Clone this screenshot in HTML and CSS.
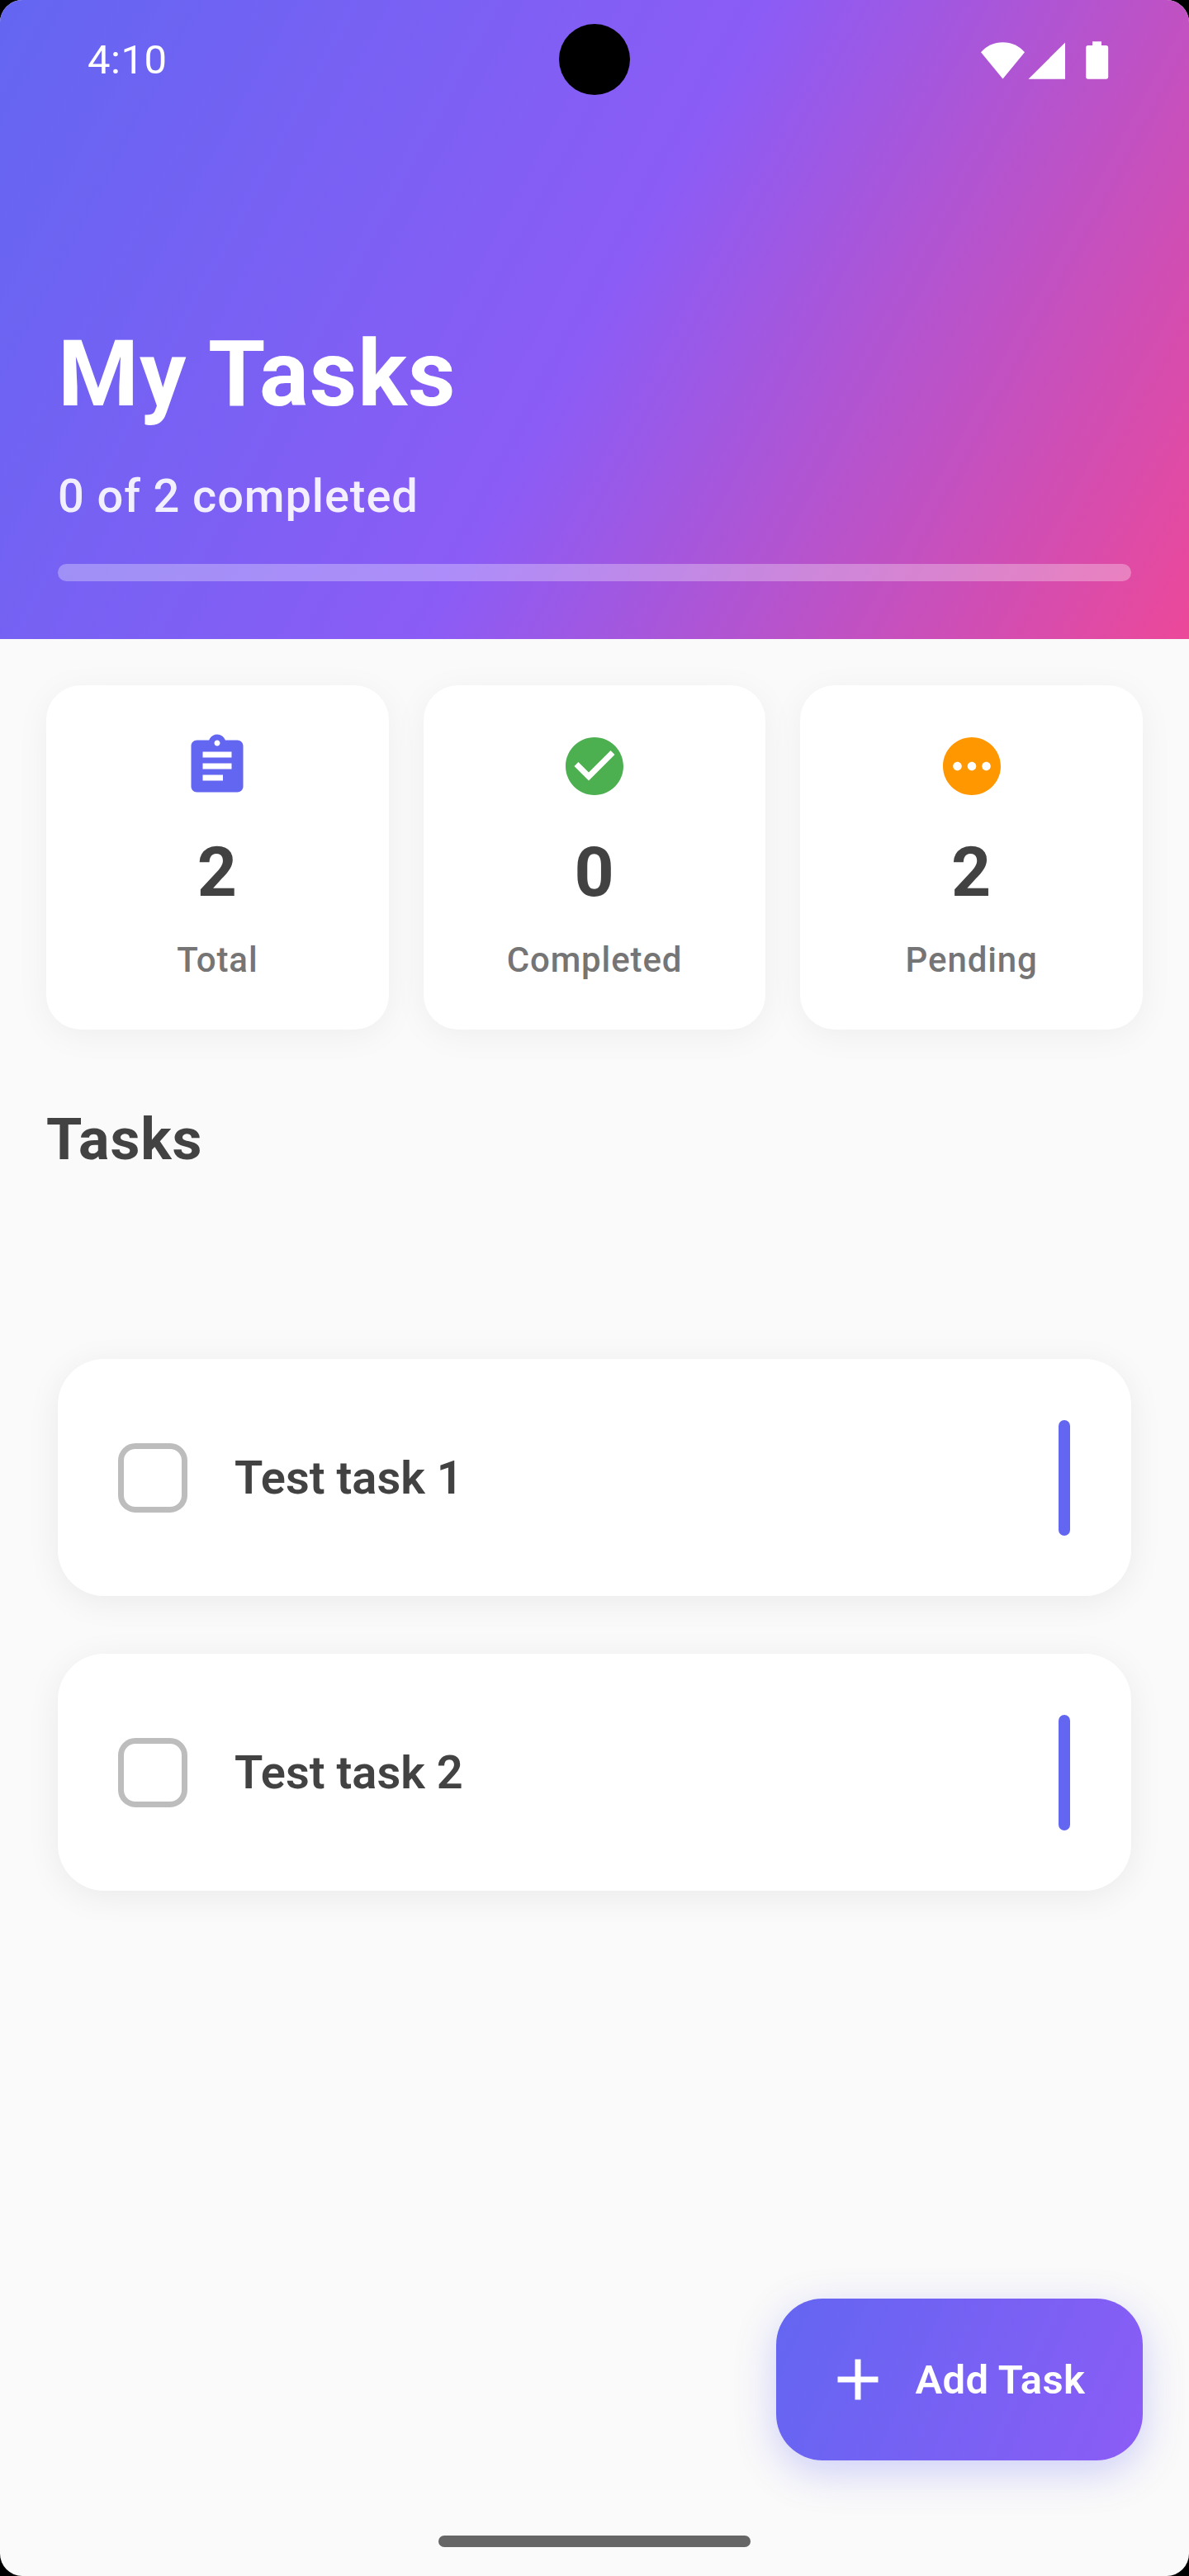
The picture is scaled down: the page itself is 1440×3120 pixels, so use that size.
FILE: index.html
```html
<!DOCTYPE html>
<html lang="en">
<head>
<meta charset="utf-8">
<title>My Tasks</title>
<link rel="stylesheet" href="styles.css">
</head>
<body>
<div class="screen">
  <header class="header">
    <div class="status-bar">
      <span class="clock">4:10</span>
      <svg class="status-icons" width="156" height="48" viewBox="0 0 156 48" fill="#fff">
        <path d="M0 14.2C7 6.500 16 2.300 26.500 2.300S46 6.500 53 14.200L26.500 46.500Z"/>
        <path d="M57.500 46.700L102 2.500V46.700Z"/>
        <path d="M135 1.200h11V6h5.500a2.700 2.700 0 0 1 2.700 2.700V44a2.700 2.700 0 0 1-2.700 2.700h-21.600a2.700 2.700 0 0 1-2.700-2.700V8.700A2.700 2.700 0 0 1 129.900 6H135Z"/>
      </svg>
    </div>
    <h1 class="title">My Tasks</h1>
    <p class="subtitle">0 of 2 completed</p>
    <div class="progress"></div>
  </header>
  <main class="content">
    <section class="stats">
      <div class="stat-card">
        <svg class="stat-icon total" viewBox="0 0 24 24"><path d="M19 3h-4.180C14.400 1.840 13.300 1 12 1c-1.300 0-2.400.84-2.820 2H5c-1.100 0-2 .9-2 2v14c0 1.100.9 2 2 2h14c1.100 0 2-.9 2-2V5c0-1.100-.9-2-2-2zm-7 0c.55 0 1 .45 1 1s-.45 1-1 1-1-.45-1-1 .45-1 1-1zm2 14H7v-2h7v2zm3-4H7v-2h10v2zm0-4H7V7h10v2z"/></svg>
        <span class="stat-value">2</span>
        <span class="stat-label">Total</span>
      </div>
      <div class="stat-card">
        <svg class="stat-icon done" viewBox="0 0 24 24"><path d="M12 2C6.480 2 2 6.480 2 12s4.480 10 10 10 10-4.480 10-10S17.520 2 12 2zm-2 15l-5-5 1.410-1.410L10 14.170l7.590-7.590L19 8l-9 9z"/></svg>
        <span class="stat-value">0</span>
        <span class="stat-label">Completed</span>
      </div>
      <div class="stat-card">
        <svg class="stat-icon pending" viewBox="0 0 24 24"><path d="M12 2C6.480 2 2 6.480 2 12s4.480 10 10 10 10-4.480 10-10S17.520 2 12 2zM7 13.500c-.83 0-1.500-.67-1.500-1.500s.67-1.500 1.500-1.500 1.500.67 1.500 1.500-.67 1.500-1.500 1.500zm5 0c-.83 0-1.500-.67-1.500-1.500s.67-1.500 1.500-1.500 1.500.67 1.500 1.500-.67 1.500-1.500 1.500zm5 0c-.83 0-1.500-.67-1.500-1.500s.67-1.500 1.500-1.500 1.500.67 1.500 1.500-.67 1.500-1.500 1.500z"/></svg>
        <span class="stat-value">2</span>
        <span class="stat-label">Pending</span>
      </div>
    </section>
    <h2 class="section-title">Tasks</h2>
    <ul class="task-list">
      <li class="task">
        <span class="checkbox"></span>
        <span class="task-name">Test task 1</span>
        <span class="accent"></span>
      </li>
      <li class="task">
        <span class="checkbox"></span>
        <span class="task-name">Test task 2</span>
        <span class="accent"></span>
      </li>
    </ul>
  </main>
  <div class="camera"></div>
  <button class="fab" type="button">
    <svg class="fab-icon" viewBox="0 0 24 24"><path d="M19 13h-6v6h-2v-6H5v-2h6V5h2v6h6v2z"/></svg>
    <span class="fab-label">Add Task</span>
  </button>
  <div class="nav-pill"></div>
</div>
</body>
</html>
```
FILE: styles.css
```css
* {
  box-sizing: border-box;
}

body {
  margin: 0;
  background: #000;
  font-family: Roboto, "Liberation Sans", sans-serif;
}

h1, h2, p, ul {
  margin: 0;
  padding: 0;
}

.screen {
  position: relative;
  width: 1440px;
  height: 3120px;
  overflow: hidden;
  border-radius: 27px;
  background: #fafafa;
}

.header {
  height: 774px;
  padding: 0 70px;
  background: linear-gradient(118.26deg, #6366f1 0%, #8b5cf6 50%, #ec4899 100%);
  color: #fff;
}

.status-bar {
  display: flex;
  align-items: center;
  justify-content: space-between;
  height: 144px;
  padding: 1px 26px 0 36px;
}

.clock {
  font-size: 49px;
  line-height: 58px;
  letter-spacing: 0.5px;
}

.status-icons {
  display: block;
}

.title {
  margin-top: 243px;
  font-size: 112px;
  font-weight: 700;
  line-height: 131px;
  letter-spacing: 0.875px;
}

.subtitle {
  margin-top: 50px;
  font-size: 56px;
  font-weight: 500;
  line-height: 66px;
  letter-spacing: 0.875px;
  color: rgba(255, 255, 255, 0.9);
}

.progress {
  height: 21px;
  margin-top: 49px;
  border-radius: 10.5px;
  background: rgba(255, 255, 255, 0.3);
}

.content {
  padding: 56px 56px 0;
}

.stats {
  display: grid;
  grid-template-columns: repeat(3, 1fr);
  gap: 42px;
}

.stat-card {
  display: flex;
  flex-direction: column;
  align-items: center;
  height: 417px;
  padding-top: 56px;
  border-radius: 42px;
  background: #fff;
  box-shadow: 0 7px 41px rgba(0, 0, 0, 0.05);
}

.stat-icon {
  width: 84px;
  height: 84px;
}

.total {
  fill: #6366f1;
}

.done {
  fill: #4caf50;
}

.pending {
  fill: #ff9800;
}

.stat-value {
  margin-top: 38px;
  font-size: 84px;
  font-weight: 700;
  line-height: 98px;
  letter-spacing: 0.875px;
  color: #424242;
}

.stat-label {
  margin-top: 32px;
  font-size: 42px;
  font-weight: 500;
  line-height: 49px;
  letter-spacing: 0.875px;
  color: #757575;
}

.section-title {
  margin-top: 92px;
  font-size: 70px;
  font-weight: 700;
  line-height: 82px;
  letter-spacing: 0.875px;
  color: #424242;
}

.task-list {
  display: flex;
  flex-direction: column;
  gap: 70px;
  margin-top: 225px;
  padding: 0 14px;
  list-style: none;
}

.task {
  display: flex;
  align-items: center;
  gap: 57px;
  height: 287px;
  padding: 0 74px 0 73px;
  border-radius: 56px;
  background: #fff;
  box-shadow: 0 7px 41px rgba(0, 0, 0, 0.065);
}

.checkbox {
  width: 84px;
  height: 84px;
  border: 7px solid #bdbdbd;
  border-radius: 21px;
}

.task-name {
  flex: 1;
  font-size: 56px;
  font-weight: 600;
  line-height: 66px;
  color: #424242;
}

.accent {
  width: 14px;
  height: 140px;
  border-radius: 7px;
  background: #6366f1;
}

.camera {
  position: absolute;
  top: 29px;
  left: 677px;
  width: 86px;
  height: 86px;
  border-radius: 50%;
  background: #000;
}

.fab {
  position: absolute;
  right: 56px;
  bottom: 140px;
  display: flex;
  align-items: center;
  gap: 28px;
  width: 444px;
  height: 196px;
  padding: 0 0 0 56.5px;
  border: 0;
  border-radius: 56px;
  background: linear-gradient(113.8deg, #6366f1, #8b5cf6);
  box-shadow: 0 14px 49px rgba(99, 102, 241, 0.3);
  color: #fff;
  font-family: inherit;
}

.fab-icon {
  width: 84px;
  height: 84px;
  fill: #fff;
}

.fab-label {
  padding-top: 2px;
  font-size: 49px;
  font-weight: 600;
  line-height: 58px;
  letter-spacing: 0.35px;
  white-space: nowrap;
}

.nav-pill {
  position: absolute;
  bottom: 35px;
  left: 531px;
  width: 378px;
  height: 14px;
  border-radius: 7px;
  background: #666;
}
```
